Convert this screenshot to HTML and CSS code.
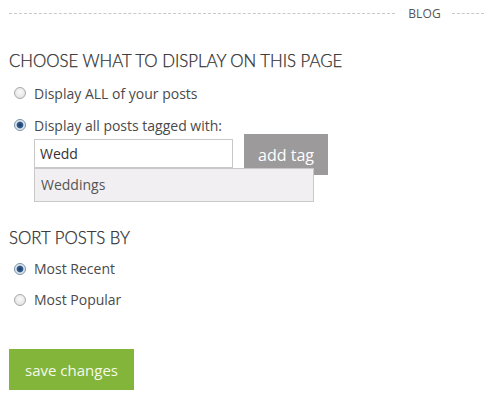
FILE: index.html
```html
<!DOCTYPE html>
<html>
<head>
<meta charset="utf-8">
<link rel="stylesheet" href="styles.css">
</head>
<body>
<div class="page">
  <div class="crumb">
    <span class="dash dash-left"></span>
    <span class="crumb-label">BLOG</span>
    <span class="dash dash-right"></span>
  </div>

  <h2 class="heading first">CHOOSE WHAT TO DISPLAY ON THIS PAGE</h2>
  <div class="options">
    <div class="option"><span class="radio"></span><span class="label">Display ALL of your posts</span></div>
    <div class="option"><span class="radio checked"></span><span class="label">Display all posts tagged with:</span></div>
  </div>

  <div class="tag-row">
    <div class="tag-field">
      <div class="tag-input">Wedd</div>
      <div class="suggest">Weddings</div>
    </div>
    <button class="add-tag">add tag</button>
  </div>

  <h2 class="heading second">SORT POSTS BY</h2>
  <div class="options">
    <div class="option"><span class="radio checked"></span><span class="label">Most Recent</span></div>
    <div class="option"><span class="radio"></span><span class="label">Most Popular</span></div>
  </div>

  <button class="save">save changes</button>
</div>
</body>
</html>
```
FILE: styles.css
```css
html, body {
  margin: 0;
  padding: 0;
  background: #fff;
}
.page {
  width: 484px;
  height: 408px;
  overflow: hidden;
  font-family: "Open Sans", "Noto Sans", sans-serif;
  color: #444;
}
.crumb {
  display: flex;
  align-items: center;
  height: 26px;
  padding-left: 9px;
}
.dash {
  border-top: 1px dashed #c8c8c8;
  height: 0;
}
.dash-left {
  flex: 1;
}
.dash-right {
  width: 32px;
}
.crumb-label {
  font-size: 12px;
  color: #555;
  padding: 0 11px 0 13px;
  letter-spacing: 0.2px;
}
.heading {
  font-family: Lato, sans-serif;
  font-weight: 300;
  font-size: 16.8px;
  line-height: 20px;
  color: #2f2f2f;
  margin: 0;
  padding-left: 9px;
  -webkit-text-stroke: 0.25px #2f2f2f;
}
.heading.first {
  margin-top: 25px;
}
.heading.second {
  margin-top: 53px;
}
.options {
  display: flex;
  flex-direction: column;
  margin-top: 6px;
}
.heading.second + .options {
  margin-top: 5px;
}
.option {
  display: flex;
  align-items: center;
  height: 32px;
  padding-left: 14px;
  font-size: 14px;
  color: #4a4a4a;
}
.heading.second + .options .option {
  height: 31px;
}
.radio {
  width: 10px;
  height: 10px;
  border-radius: 50%;
  border: 1px solid #a9a9a9;
  background: radial-gradient(circle at 50% 40%, #fafafa 0%, #dcdcdc 100%);
  margin-right: 8px;
  flex: none;
}
.radio.checked {
  border-color: #7a8fa6;
  background: radial-gradient(circle at 50% 50%, #1c3d66 0%, #2f5c8f 40%, #dfe6ee 55%, #f4f4f4 100%);
}
.tag-row {
  display: flex;
  align-items: flex-start;
  padding-left: 34px;
  margin-top: -7px;
}
.tag-field {
  position: relative;
  margin-top: 5px;
}
.tag-input {
  width: 192px;
  height: 27px;
  border: 1px solid #c9c9c9;
  padding-left: 5px;
  font-size: 14px;
  line-height: 27px;
  color: #333;
  background: #fff;
}
.suggest {
  position: absolute;
  left: 0;
  top: 29px;
  z-index: 2;
  width: 272px;
  height: 32px;
  border: 1px solid #c9c9c9;
  background: #f1eff2;
  padding-left: 6px;
  font-size: 14px;
  line-height: 32px;
  color: #555;
}
.add-tag {
  margin-left: 11px;
  width: 84px;
  height: 41px;
  border: none;
  background: #9c9a9b;
  color: #fff;
  font-family: "Open Sans", sans-serif;
  font-size: 16px;
  padding: 0;
}
.save {
  display: block;
  margin: 34px 0 0 9px;
  width: 125px;
  height: 41px;
  border: none;
  background: #83b53a;
  color: #f4f9ec;
  font-family: "Open Sans", sans-serif;
  font-size: 15px;
  padding: 0;
}
```
